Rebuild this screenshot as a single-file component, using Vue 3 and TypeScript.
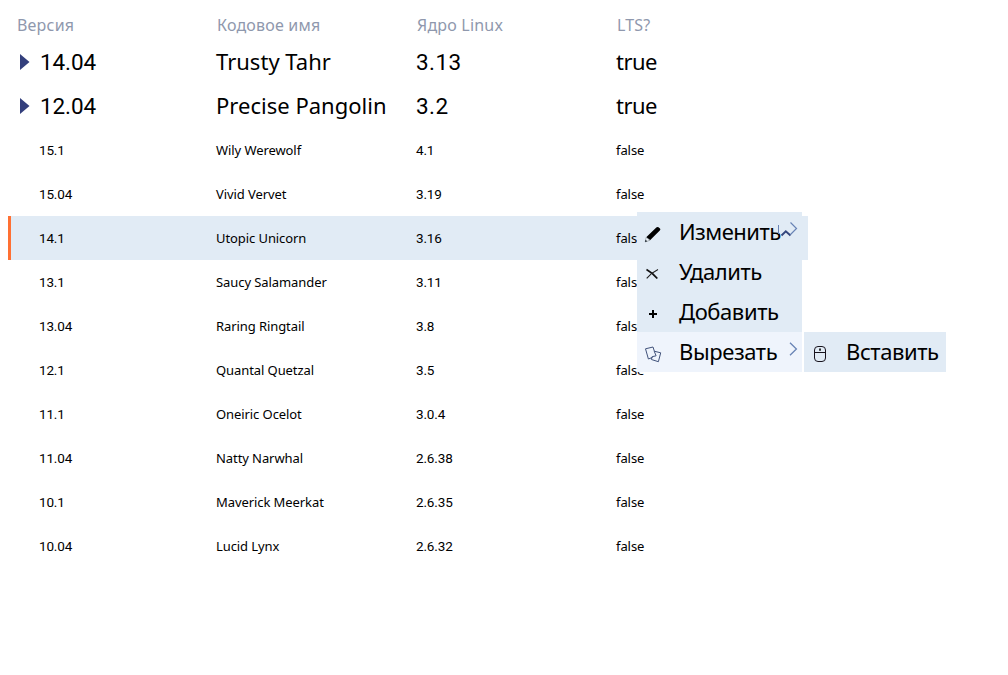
<script setup lang="ts">
interface Release {
  version: string
  name: string
  kernel: string
  lts: boolean
}

const columns: string[] = ['Версия', 'Кодовое имя', 'Ядро Linux', 'LTS?']

const releases: Release[] = [
  { version: '14.04', name: 'Trusty Tahr', kernel: '3.13', lts: true },
  { version: '12.04', name: 'Precise Pangolin', kernel: '3.2', lts: true },
  { version: '15.1', name: 'Wily Werewolf', kernel: '4.1', lts: false },
  { version: '15.04', name: 'Vivid Vervet', kernel: '3.19', lts: false },
  { version: '14.1', name: 'Utopic Unicorn', kernel: '3.16', lts: false },
  { version: '13.1', name: 'Saucy Salamander', kernel: '3.11', lts: false },
  { version: '13.04', name: 'Raring Ringtail', kernel: '3.8', lts: false },
  { version: '12.1', name: 'Quantal Quetzal', kernel: '3.5', lts: false },
  { version: '11.1', name: 'Oneiric Ocelot', kernel: '3.0.4', lts: false },
  { version: '11.04', name: 'Natty Narwhal', kernel: '2.6.38', lts: false },
  { version: '10.1', name: 'Maverick Meerkat', kernel: '2.6.35', lts: false },
  { version: '10.04', name: 'Lucid Lynx', kernel: '2.6.32', lts: false },
]
const selected = '14.1'
</script>

<template>
  <main class="page">
    <div class="row head">
      <div v-for="c in columns" :key="c" class="cell">{{ c }}</div>
    </div>
    <div
      v-for="r in releases"
      :key="r.version"
      class="row"
      :class="{ parent: r.lts, selected: r.version === selected }"
    >
      <div class="cell version num">
        <svg v-if="r.lts" class="arrow" width="10" height="16" viewBox="0 0 10 16"><path d="M0 0L9.5 8L0 16Z" fill="#333f7c" /></svg>
        <span>{{ r.version }}</span>
      </div>
      <div class="cell name">{{ r.name }}</div>
      <div class="cell num kernel">{{ r.kernel }}</div>
      <div class="cell lts">{{ r.lts }}</div>
    </div>

    <nav class="menu">
      <div class="item">
        <svg class="icon" width="18" height="18" viewBox="0 0 18 18">
          <path d="M2.2 12.3L12.3 2.4Q13.2 1.5 14.5 2.2L16 3.5Q16.9 4.4 15.8 5.5L6 15.2Z" fill="#000" />
          <path d="M2.2 12.3L1.2 17L6 15.2Z" fill="#eef3f8" stroke="#7b858c" stroke-width=".6" />
          <path d="M1 17.1L1.6 14.7L3.3 16.3Z" fill="#172129" />
        </svg>
        <span class="label edit">Изменить</span>
        <svg class="pointer" width="24" height="20" viewBox="0 0 24 20" fill="none">
          <path d="M2.5 3V12" stroke="#6883b5" stroke-width="1" />
          <path d="M5.5 13.5L9.8 9.3L14.5 13.5" stroke="#34467d" stroke-width="1.9" />
          <path d="M14.5 .5L20.5 6.5L14.5 12.5" stroke="#6883b5" stroke-width="1.2" />
        </svg>
      </div>
      <div class="item">
        <svg class="icon" width="18" height="18" viewBox="0 0 18 18" fill="none">
          <path d="M2.5 4.5Q8 7.5 13.3 13.5" stroke="#111" stroke-width="1.8" />
          <path d="M2.7 13.3Q7 8 14 4.5" stroke="#222" stroke-width="1.1" />
        </svg>
        <span class="label">Удалить</span>
      </div>
      <div class="item">
        <svg class="icon" width="18" height="18" viewBox="0 0 18 18"><path d="M5 9H13M9 5V13" stroke="#000" stroke-width="2" /></svg>
        <span class="label">Добавить</span>
      </div>
      <div class="item hover">
        <svg class="icon" width="18" height="18" viewBox="0 0 18 18" fill="none" stroke="#42537b" stroke-width="1">
          <path d="M8.5 12.4L4.4 14L1.5 3.8L9 2L10.4 6.3" />
          <path d="M10.2 6.2L16.7 7.8L14.4 16.7L7.4 14.5L8.1 11.7L12.1 10.8Z" />
        </svg>
        <span class="label">Вырезать</span>
        <svg class="chevron" width="9" height="14" viewBox="0 0 9 14" fill="none"><path d="M1 .7L7.4 7L1 13.3" stroke="#6883b5" stroke-width="1.3" /></svg>
        <nav class="menu submenu">
          <div class="item">
            <svg class="icon mouse" width="14" height="18" viewBox="0 0 14 18" fill="none">
              <rect x="1.5" y="1.5" width="11" height="15" rx="3.5" stroke="#17131d" />
              <path d="M1.5 7.5H12.5" stroke="#17131d" />
              <path d="M7 3.5V5.8" stroke="#000" stroke-width="1.6" />
            </svg>
            <span class="label">Вставить</span>
          </div>
        </nav>
      </div>
    </nav>
  </main>
</template>

<style>
body { margin: 0; background: #fff; }
</style>

<style scoped>
.page {
  position: relative;
  box-sizing: border-box;
  height: 675px;
  padding: 8px;
  font-family: "Noto Sans", "Open Sans", sans-serif;
  color: #000;
}
.row {
  display: grid;
  grid-template-columns: repeat(4, 200px);
  align-items: center;
  box-sizing: border-box;
  width: 800px;
  height: 44px;
  font-size: 13px;
  letter-spacing: -0.08px;
}
.row.head { height: 32px; font-size: 16px; letter-spacing: 0.2px; color: #8f98ad; }
.cell { padding: 0 8px; white-space: nowrap; line-height: 32px; }
.head .cell { padding: 2px 9px 0; line-height: 30px; }
.num { font-family: Roboto, sans-serif; font-size: 13.5px; letter-spacing: -0.15px; }
.version { display: flex; align-items: center; padding-left: 31px; }
.parent { font-size: 22px; letter-spacing: 0.02px; }
.parent .name, .parent .lts { padding-bottom: 2px; }
.parent .lts { letter-spacing: -0.5px; }
.parent .num { font-size: 22.5px; letter-spacing: -0.1px; }
.parent .kernel { letter-spacing: 0.4px; }
.parent .version { padding-left: 12px; }
.arrow { flex: none; margin: 0 10px 0 0; }
.selected { background: #e1ebf5; box-shadow: inset 3px 0 #ff7033; }
.menu {
  position: absolute;
  left: 637px;
  top: 212px;
  width: 165px;
  background: #e1ebf5;
}
.item {
  position: relative;
  display: flex;
  align-items: center;
  height: 40px;
  font-size: 22px;
  letter-spacing: -0.4px;
}
.icon { flex: none; margin: 3px 0 0 7px; }
.label { margin-left: 17px; padding-bottom: 2px; line-height: 38px; white-space: nowrap; }
.edit { letter-spacing: -0.52px; }
.hover { background: #eff4fc; }
.pointer { position: absolute; left: 139px; top: 10px; }
.chevron { position: absolute; left: 152px; top: 10px; }
.submenu { left: 167px; top: 0; width: 142px; }
.submenu .icon { margin-left: 9px; }
.submenu .label { margin-left: 19px; }
</style>
